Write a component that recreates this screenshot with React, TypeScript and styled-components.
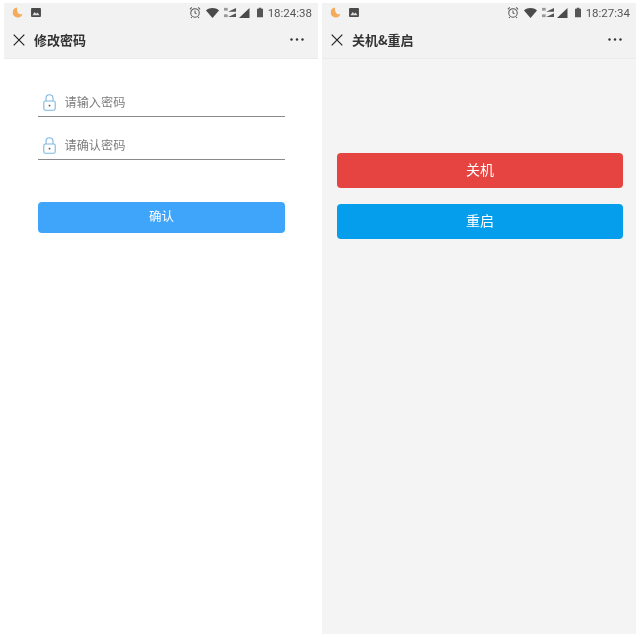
import React from "react";
import styled, { createGlobalStyle } from "styled-components";

const Global = createGlobalStyle`
  html, body { margin: 0; padding: 0; background: #fff; }
  * { box-sizing: border-box; }
  body { font-family: "Roboto", "Noto Sans CJK SC", sans-serif; }
`;
const Page = styled.div`
  width: 640px; height: 637px; display: flex; gap: 4px;
  padding: 3px 4px; background: #fff; overflow: hidden;
`;
const Phone = styled.section<{ $bg: string }>`
  width: 314px; height: 631px; background: ${(p) => p.$bg};
  display: flex; flex-direction: column; filter: blur(0.35px);
`;
const Header = styled.header`
  height: 56px; background: #f2f2f2; border-bottom: 1px solid #ebebeb; flex: none;
`;
const StatusBar = styled.div`
  height: 19px; display: flex; align-items: center; padding: 0 6px 0 8px;
`;
const StatusRight = styled.div`
  margin-left: auto; display: flex; align-items: center;
`;
const Slot = styled.span<{ $ml: number }>`
  display: flex; margin-left: ${(p) => p.$ml}px;
`;
const Time = styled.span`
  font-size: 11.5px; color: #555; margin-left: 5px;
`;
const Nav = styled.div`
  height: 35px; display: flex; align-items: center; padding: 0 14px 0 9px;
`;
const Title = styled.h1`
  margin: 0 0 0 9px; font: 700 13px "Noto Sans CJK SC", sans-serif; color: #333; flex: 1;
`;
const Form = styled.div`
  padding: 28px 33px 0 34px; display: flex; flex-direction: column;
`;
const Field = styled.label`
  height: 30px; display: flex; align-items: center; gap: 9px; padding: 2px 0 0 5px;
  border-bottom: 1px solid #8a8a8a; margin-bottom: 13px;
`;
const Placeholder = styled.span`
  font: 400 12.2px "Noto Sans CJK SC", sans-serif; color: #7d7d7d;
  margin: 0 0 2px -0.5px;
`;
const Button = styled.button<{ $bg: string; $h: number; $size: number }>`
  width: 100%; height: ${(p) => p.$h}px; border: 0; border-radius: 4px;
  background: ${(p) => p.$bg}; color: #fff; padding: 0 0 4px;
  font: 400 ${(p) => p.$size}px "Noto Sans CJK SC", sans-serif;
  display: block;
`;
const ConfirmWrap = styled.div`
  margin-top: 29px;
`;
const Actions = styled.div`
  padding: 94px 13px 0 15px; display: flex; flex-direction: column; gap: 16px;
`;

const Moon = () => (
  <svg width="11" height="11" viewBox="0 0 11 11">
    <path d="M5 .5 A5 5 0 1 0 10.5 7 C8 8.2 4.6 6.5 5 .5Z" fill="#f5ab5c" />
  </svg>
);
const Pic = () => (
  <svg width="10" height="9" viewBox="0 0 11 10">
    <rect width="11" height="10" rx="1" fill="#4a4a4a" />
    <path d="M1.5 8 L4 4.5 L5.7 6.5 L7.2 5 L9.5 8Z" fill="#ddd" />
  </svg>
);
const Alarm = () => (
  <svg width="12" height="13" viewBox="0 0 13 13" fill="none" stroke="#555" strokeWidth="1.1">
    <circle cx="6.5" cy="7" r="4.6" />
    <path d="M6.5 4.4V7L8.2 8M1 3 3 1M12 3 10 1M3 11.5 2.2 12.5M10 11.5 10.8 12.5" />
  </svg>
);
const Wifi = () => (
  <svg width="13" height="10" viewBox="0 0 13 10"><path d="M0 2.4C3.7-.8 9.3-.8 13 2.4L6.5 10Z" fill="#4a4a4a" /></svg>
);
const Data = () => (
  <svg width="12" height="11" viewBox="0 0 13 11" fill="#555">
    <rect x="0" y="0.5" width="4" height="3" fill="#999" />
    <path d="M4.5 4.8 13 .5V4.8ZM4.5 10.5 13 6.2V10.5Z" />
    <rect x="0" y="7.5" width="4" height="3" fill="#999" />
  </svg>
);
const Signal = () => (
  <svg width="11" height="10" viewBox="0 0 11 10"><path d="M0 10 10.5 0V10Z" fill="#4a4a4a" /></svg>
);
const Battery = () => (
  <svg width="6" height="11" viewBox="0 0 7 11"><path d="M2 0H5V1H7V11H0V1H2Z" fill="#555" /></svg>
);
const Close = () => (
  <svg width="12" height="12" viewBox="0 0 12 12" stroke="#222" strokeWidth="1.2"><path d="M.7.7 11.3 11.3M11.3.7.7 11.3" /></svg>
);
const Dots = () => (
  <svg width="14" height="3" viewBox="0 0 14 3" fill="#333">
    <circle cx="1.5" cy="1.5" r="1.2" /><circle cx="7" cy="1.5" r="1.2" /><circle cx="12.5" cy="1.5" r="1.2" />
  </svg>
);
const Lock = () => (
  <svg width="13" height="17" viewBox="0 0 13 17" fill="none" stroke="#7db8e0" strokeWidth="1.1">
    <path d="M3 7V4.2a3.5 3.5 0 0 1 7 0V7" />
    <rect x=".8" y="7" width="11.4" height="9.3" rx="1.6" />
    <rect x="5.7" y="10.8" width="1.6" height="1.6" fill="#555" stroke="none" />
  </svg>
);

const Top = ({ time, title }: { time: string; title: string }) => (
  <Header>
    <StatusBar>
      <Moon />
      <Slot $ml={8}><Pic /></Slot>
      <StatusRight>
        <Alarm />
        <Slot $ml={5}><Wifi /></Slot>
        <Slot $ml={5}><Data /></Slot>
        <Slot $ml={3}><Signal /></Slot>
        <Slot $ml={7}><Battery /></Slot>
        <Time>{time}</Time>
      </StatusRight>
    </StatusBar>
    <Nav>
      <Close />
      <Title>{title}</Title>
      <Dots />
    </Nav>
  </Header>
);

export default function App() {
  return (
    <>
      <Global />
      <Page>
        <Phone $bg="#ffffff">
          <Top time="18:24:38" title="修改密码" />
          <Form>
            <Field><Lock /><Placeholder>请输入密码</Placeholder></Field>
            <Field><Lock /><Placeholder>请确认密码</Placeholder></Field>
            <ConfirmWrap>
              <Button $bg="#3ea5fb" $h={31} $size={12.5}>确认</Button>
            </ConfirmWrap>
          </Form>
        </Phone>
        <Phone $bg="#f4f4f4">
          <Top time="18:27:34" title="关机&重启" />
          <Actions>
            <Button $bg="#e64441" $h={35} $size={14}>关机</Button>
            <Button $bg="#059eed" $h={35} $size={14}>重启</Button>
          </Actions>
        </Phone>
      </Page>
    </>
  );
}
